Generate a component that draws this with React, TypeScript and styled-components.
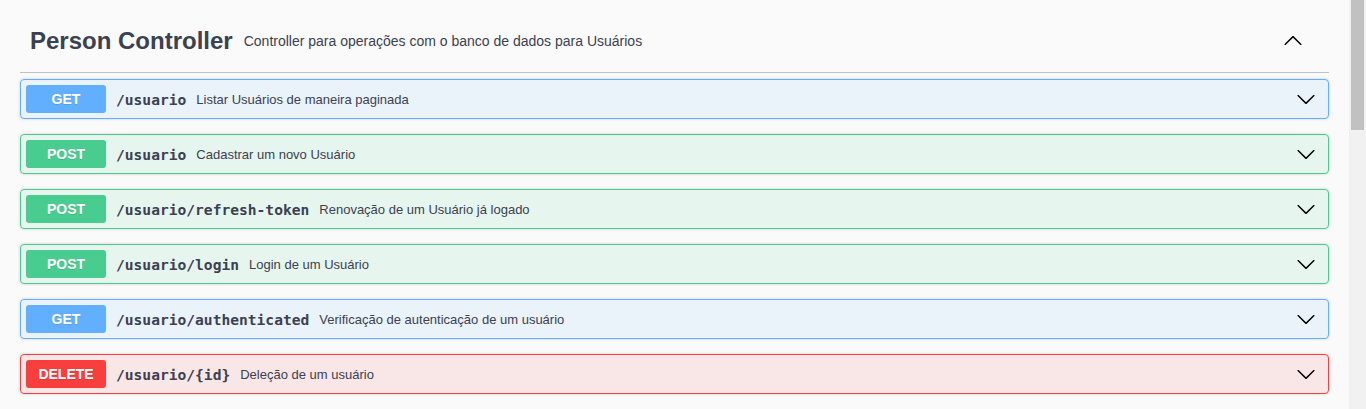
import React from "react";
import styled, { createGlobalStyle } from "styled-components";

const GlobalStyle = createGlobalStyle`
  html, body {
    margin: 0;
    padding: 0;
    background: #fafafa;
    overflow: hidden;
  }
`;

type Method = "get" | "post" | "delete";

const palette: Record<Method, { main: string; soft: string }> = {
  get: { main: "#61affe", soft: "rgba(97, 175, 254, 0.1)" },
  post: { main: "#49cc90", soft: "rgba(73, 204, 144, 0.1)" },
  delete: { main: "#f93e3e", soft: "rgba(249, 62, 62, 0.1)" },
};

const Page = styled.div`
  display: flex;
  height: 409px;
  overflow: hidden;
`;

const Main = styled.main`
  flex: 1;
  padding: 0 20px;
  font-family: "Liberation Sans", Arial, sans-serif;
  color: #3b4151;
`;

const ScrollTrack = styled.div`
  width: 17px;
  background: #f1f1f1;
  padding: 0 2px;
  box-sizing: border-box;
`;

const ScrollThumb = styled.div`
  height: 130px;
  background: #c1c1c1;
`;

const TagHeader = styled.h3`
  display: flex;
  align-items: center;
  margin: 0 0 6px;
  padding: 21px 26px 11px 10px;
  height: 40px;
  border-bottom: 1px solid rgba(59, 65, 81, 0.3);
  font-size: 24px;
  font-weight: 700;
  color: #3b4151;
`;

const TagNote = styled.small`
  flex: 1;
  padding: 0 11px;
  font-size: 14px;
  font-weight: 400;
`;

const ArrowButton = styled.button`
  display: flex;
  align-items: center;
  justify-content: center;
  background: none;
  border: none;
  padding: 0;
  width: 20px;
  height: 20px;
  cursor: pointer;
`;

const Block = styled.div<{ $method: Method }>`
  display: flex;
  align-items: center;
  margin: 0 0 15px;
  padding: 5px;
  border: 1px solid ${(p) => palette[p.$method].main};
  border-radius: 4px;
  background: ${(p) => palette[p.$method].soft};
  box-shadow: 0 0 3px rgba(0, 0, 0, 0.19);
`;

const Badge = styled.span<{ $method: Method }>`
  min-width: 80px;
  padding: 6px 0;
  border-radius: 3px;
  background: ${(p) => palette[p.$method].main};
  color: #fff;
  font-size: 14px;
  font-weight: 700;
  line-height: 16px;
  text-align: center;
  text-shadow: 0 1px 0 rgba(0, 0, 0, 0.1);
`;

const Path = styled.span`
  padding: 0 10px;
  font-family: "DejaVu Sans Mono", monospace;
  font-size: 14.6px;
  font-weight: 700;
  color: #3b4151;
  letter-spacing: 0;
`;

const Description = styled.span`
  flex: 1;
  font-size: 13px;
  color: #3b4151;
`;

const RowArrow = styled(ArrowButton)`
  margin-right: 7px;
`;

const Chevron = ({ up }: { up?: boolean }) => (
  <svg
    width="20"
    height="20"
    viewBox="0 0 20 20"
    style={up ? { transform: "rotate(180deg)" } : undefined}
  >
    <path
      fill="#000"
      d="M17.418 6.109c.272-.268.709-.268.979 0s.271.701 0 .969l-7.908 7.83c-.27.268-.707.268-.979 0l-7.908-7.83c-.27-.268-.27-.701 0-.969.271-.268.709-.268.979 0L10 13.25l7.418-7.141z"
    />
  </svg>
);

const ops: { method: Method; path: string; summary: string }[] = [
  { method: "get", path: "/usuario", summary: "Listar Usuários de maneira paginada" },
  { method: "post", path: "/usuario", summary: "Cadastrar um novo Usuário" },
  { method: "post", path: "/usuario/refresh-token", summary: "Renovação de um Usuário já logado" },
  { method: "post", path: "/usuario/login", summary: "Login de um Usuário" },
  { method: "get", path: "/usuario/authenticated", summary: "Verificação de autenticação de um usuário" },
  { method: "delete", path: "/usuario/{id}", summary: "Deleção de um usuário" },
];

const App = () => (
  <>
    <GlobalStyle />
    <Page>
      <Main>
        <TagHeader>
          <span>Person Controller</span>
          <TagNote>Controller para operações com o banco de dados para Usuários</TagNote>
          <ArrowButton aria-label="collapse">
            <Chevron up />
          </ArrowButton>
        </TagHeader>
        {ops.map((op, i) => (
          <Block key={i} $method={op.method}>
            <Badge $method={op.method}>{op.method.toUpperCase()}</Badge>
            <Path>{op.path}</Path>
            <Description>{op.summary}</Description>
            <RowArrow aria-label="expand">
              <Chevron />
            </RowArrow>
          </Block>
        ))}
      </Main>
      <ScrollTrack>
        <ScrollThumb />
      </ScrollTrack>
    </Page>
  </>
);

export default App;
